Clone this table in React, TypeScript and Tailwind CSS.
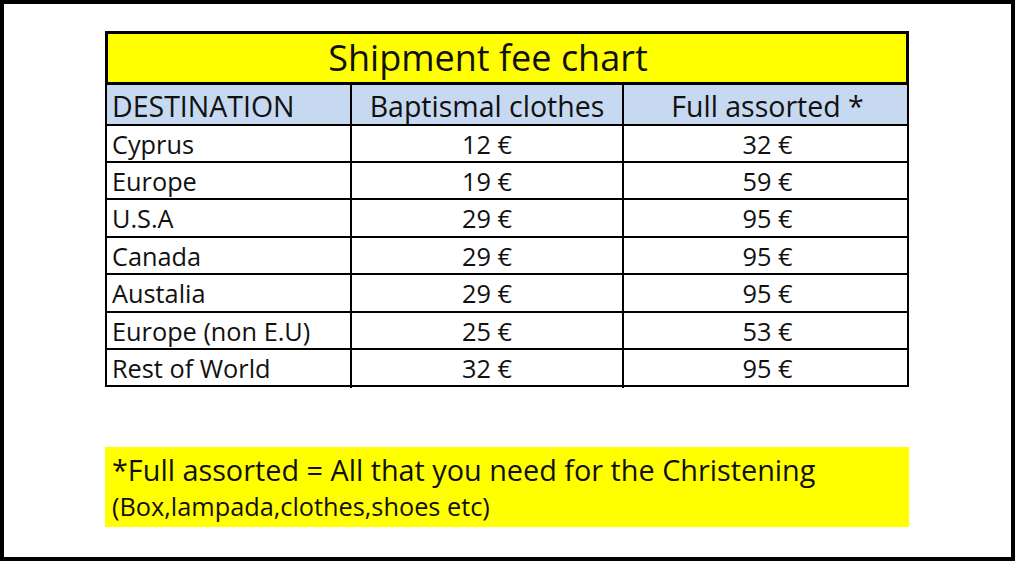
const rows = [
  { dest: 'Cyprus', bap: '12 €', full: '32 €', h: 'h-[37px]' },
  { dest: 'Europe', bap: '19 €', full: '59 €', h: 'h-[37px]' },
  { dest: 'U.S.A', bap: '29 €', full: '95 €', h: 'h-[38px]' },
  { dest: 'Canada', bap: '29 €', full: '95 €', h: 'h-[37px]' },
  { dest: 'Austalia', bap: '29 €', full: '95 €', h: 'h-[38px]' },
  { dest: 'Europe (non E.U)', bap: '25 €', full: '53 €', h: 'h-[37px]' },
  { dest: 'Rest of World', bap: '32 €', full: '95 €', h: 'h-[37px]' },
];

const App = () => {
  return (
    <div className="h-[569px] w-[1024px] bg-white font-['Open_Sans',sans-serif] text-[#111]">
      <div className="h-[561px] w-[1015px] border-4 border-black">
        <div className="ml-[101px] mt-[27px] w-[804px]">
          {/* title */}
          <div className="flex h-[54px] items-center justify-center border-[3px] border-black bg-[#ffff00] pr-[38px] text-[36px]">
            Shipment fee chart
          </div>

          {/* header */}
          <div className="grid h-[41px] grid-cols-[245px_272px_287px] border-x-2 border-b-2 border-black bg-[#c6d9f0] text-[28.5px]">
            <div className="flex items-center border-r-2 border-black pl-[5px]">DESTINATION</div>
            <div className="flex items-center justify-center border-r-2 border-black">Baptismal clothes</div>
            <div className="flex items-center justify-center">Full assorted *</div>
          </div>

          {rows.map((r) => (
            <div
              key={r.dest}
              className={`grid grid-cols-[245px_272px_287px] border-x-2 border-b-2 border-black text-[25.3px] ${r.h}`}
            >
              <div className="flex items-center border-r-2 border-black pl-[5px]">{r.dest}</div>
              <div className="flex items-center justify-center border-r-2 border-black">{r.bap}</div>
              <div className="flex items-center justify-center">{r.full}</div>
            </div>
          ))}

          {/* footnote */}
          <div className="mt-[60px] flex h-[80px] flex-col justify-center bg-[#ffff00] pl-[7px]">
            <div className="text-[28.8px] leading-[38px]">*Full assorted = All that you need for the Christening</div>
            <div className="text-[25.3px] leading-[34px]">(Box,lampada,clothes,shoes etc)</div>
          </div>
        </div>
      </div>
    </div>
  );
};

export default App;
